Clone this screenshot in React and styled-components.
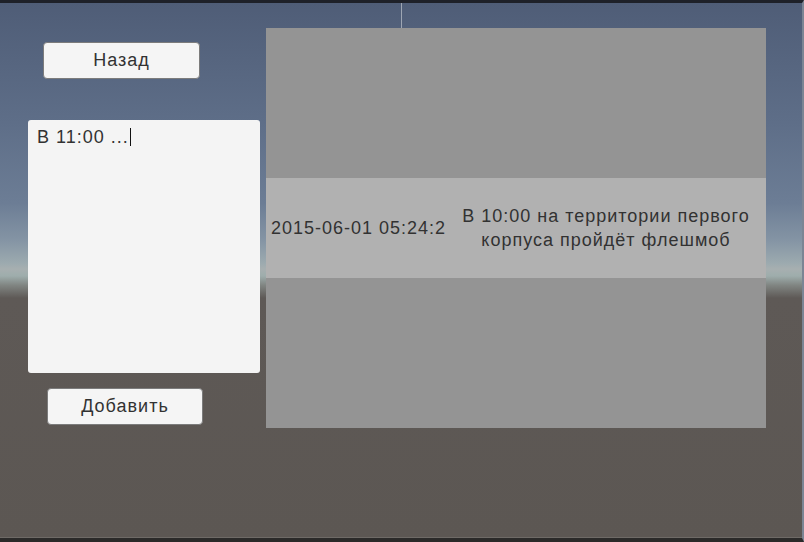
import React from 'react';
import styled, { createGlobalStyle } from 'styled-components';

const GlobalStyle = createGlobalStyle`
  html, body {
    margin: 0;
    padding: 0;
    background: #2a2928;
    font-family: "Liberation Sans", Arial, sans-serif;
  }
`;

const notes = [
  {
    date: '2015-06-01 05:24:2',
    text: 'В 10:00 на территории первого корпуса пройдёт флешмоб',
  },
];

const App = () => {
  return (
    <>
      <GlobalStyle />
      <Window>
        <Scene>
          <Sidebar>
            <Button $left={15}>Назад</Button>
            <InputField>
              В 11:00 ...<Caret />
            </InputField>
            <Button $left={19} $top={15} $width={156}>Добавить</Button>
          </Sidebar>
          <ListPanel>
            {notes.map((note) => (
              <NoteRow key={note.date}>
                <DateCell>{note.date}</DateCell>
                <MessageCell>{note.text}</MessageCell>
              </NoteRow>
            ))}
          </ListPanel>
        </Scene>
      </Window>
    </>
  );
};

export default App;

const Window = styled.div`
  width: 804px;
  height: 542px;
  box-sizing: border-box;
  border-top: 3px solid #1e2129;
  border-bottom: 4px solid #2b2a29;
  border-right: 2px solid #7b8594;
  overflow: hidden;
`;

// sky box with the scene gizmo line peeking above the list panel
const Scene = styled.div`
  height: 100%;
  box-sizing: border-box;
  display: flex;
  gap: 6px;
  padding: 25px 0 0 28px;
  border-bottom: 1px solid #6e6a66;
  background:
    linear-gradient(to right, transparent 401px, #9ea6b3 401px, #9ea6b3 402px, transparent 402px) 0 0 / 100% 26px no-repeat,
    linear-gradient(
      to bottom,
      #4f5d77 0px,
      #5e6e88 120px,
      #6c7d95 200px,
      #8494a4 237px,
      #9caaaf 260px,
      #a7afb0 266px,
      #9eadac 273px,
      #818683 282px,
      #5e5956 295px,
      #5c5753 100%
    );
`;

const Sidebar = styled.div`
  width: 232px;
  display: flex;
  flex-direction: column;
`;

const Button = styled.div`
  box-sizing: border-box;
  width: ${({ $width }) => $width || 157}px;
  height: 37px;
  margin-top: ${({ $top }) => $top ?? 14}px;
  margin-left: ${({ $left }) => $left}px;
  display: flex;
  align-items: center;
  justify-content: center;
  background: #f5f5f5;
  border: 1px solid #7c7c7c;
  border-radius: 4px;
  color: #323232;
  font-size: 18px;
  letter-spacing: 1px;
`;

const InputField = styled.div`
  box-sizing: border-box;
  height: 253px;
  margin-top: 41px;
  padding: 7px 9px;
  background: #f4f4f4;
  border-radius: 3px;
  color: #323232;
  font-size: 18px;
  letter-spacing: 1px;
  line-height: 20px;
`;

const Caret = styled.span`
  display: inline-block;
  width: 1px;
  height: 18px;
  margin-left: 1px;
  vertical-align: -3px;
  background: #111;
`;

const ListPanel = styled.div`
  width: 500px;
  height: 400px;
  display: flex;
  flex-direction: column;
  justify-content: center;
  background: #949494;
`;

const NoteRow = styled.div`
  height: 100px;
  display: grid;
  grid-template-columns: 180px 1fr;
  align-items: center;
  background: #b1b1b1;
  color: #323232;
  font-size: 18px;
  letter-spacing: 1px;
`;

const DateCell = styled.div`
  padding-left: 5px;
  white-space: nowrap;
  overflow: hidden;
`;

const MessageCell = styled.div`
  text-align: center;
  line-height: 24px;
  padding: 0 10px;
`;
